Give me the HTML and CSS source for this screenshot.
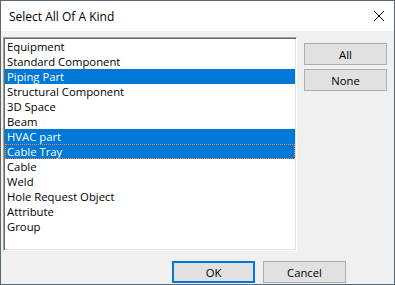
FILE: index.html
```html
<!DOCTYPE html>
<html>
<head>
    <title>Select All Of A Kind</title>
    <link rel="stylesheet" href="styles.css">
</head>
<body>
    <div class="dialog">
        <div class="titlebar">
            <span class="title">Select All Of A Kind</span>
            <span class="close">
                <svg width="12" height="12" viewBox="0 0 12 12">
                    <path d="M1 1 L11 11 M11 1 L1 11" stroke="#000" stroke-width="1" fill="none"/>
                </svg>
            </span>
        </div>

        <div class="dialog-body">
            <div class="main-row">
                <ul class="kind-list">
                    <li>Equipment</li>
                    <li>Standard Component</li>
                    <li class="selected">Piping Part</li>
                    <li>Structural Component</li>
                    <li>3D Space</li>
                    <li>Beam</li>
                    <li class="selected">HVAC part</li>
                    <li class="selected focused">Cable Tray</li>
                    <li>Cable</li>
                    <li>Weld</li>
                    <li>Hole Request Object</li>
                    <li>Attribute</li>
                    <li>Group</li>
                </ul>
                <div class="side-buttons">
                    <button class="btn">All</button>
                    <button class="btn">None</button>
                </div>
            </div>
            <div class="footer">
                <button class="btn default">OK</button>
                <button class="btn">Cancel</button>
            </div>
        </div>
    </div>
</body>
</html>
```

FILE: styles.css
```css
body {
    margin: 0;
    padding: 0;
    font-family: "Open Sans", "Noto Sans", sans-serif;
    font-size: 11.3px;
    color: #000;
}

.dialog {
    width: 395px;
    height: 285px;
    box-sizing: border-box;
    border: 1px solid #5b6770;
    display: flex;
    flex-direction: column;
    background-color: #f0f0f0;
}

.titlebar {
    height: 30px;
    background-color: #ffffff;
    display: flex;
    align-items: center;
    justify-content: space-between;
    padding-left: 8px;
    padding-right: 8px;
}

.title {
    font-size: 12px;
}

.close {
    display: flex;
    width: 12px;
    height: 12px;
    margin-right: 1px;
}

.dialog-body {
    flex: 1;
    padding: 6px 0 0 2px;
}

.main-row {
    display: flex;
}

.kind-list {
    list-style: none;
    margin: 0;
    padding: 0;
    width: 294px;
    height: 214px;
    flex-shrink: 0;
    box-sizing: border-box;
    background-color: #ffffff;
    border: 1px solid;
    border-color: #a0a0a0 #ffffff #ffffff #a0a0a0;
    box-shadow: inset 1px 1px 0 #696969, inset -1px -1px 0 #e3e3e3;
    padding: 1px;
}

.kind-list li {
    height: 15px;
    line-height: 15px;
    padding-left: 2px;
    white-space: nowrap;
}

.kind-list li.selected {
    background-color: #0078d7;
    color: #ffffff;
}

.kind-list li.focused {
    outline: 1px dotted #ff8728;
    outline-offset: -1px;
}

.side-buttons {
    display: flex;
    flex-direction: column;
    gap: 4px;
    margin-left: 7px;
    margin-top: 6px;
}

.btn {
    width: 83px;
    height: 22px;
    box-sizing: border-box;
    background-color: #e1e1e1;
    border: 1px solid #adadad;
    font-family: inherit;
    font-size: 11.3px;
    color: #000;
    padding: 0;
}

.btn.default {
    border: 2px solid #0078d7;
}

.footer {
    display: flex;
    justify-content: flex-end;
    gap: 8px;
    margin-top: 10px;
    padding-right: 48px;
}
```
